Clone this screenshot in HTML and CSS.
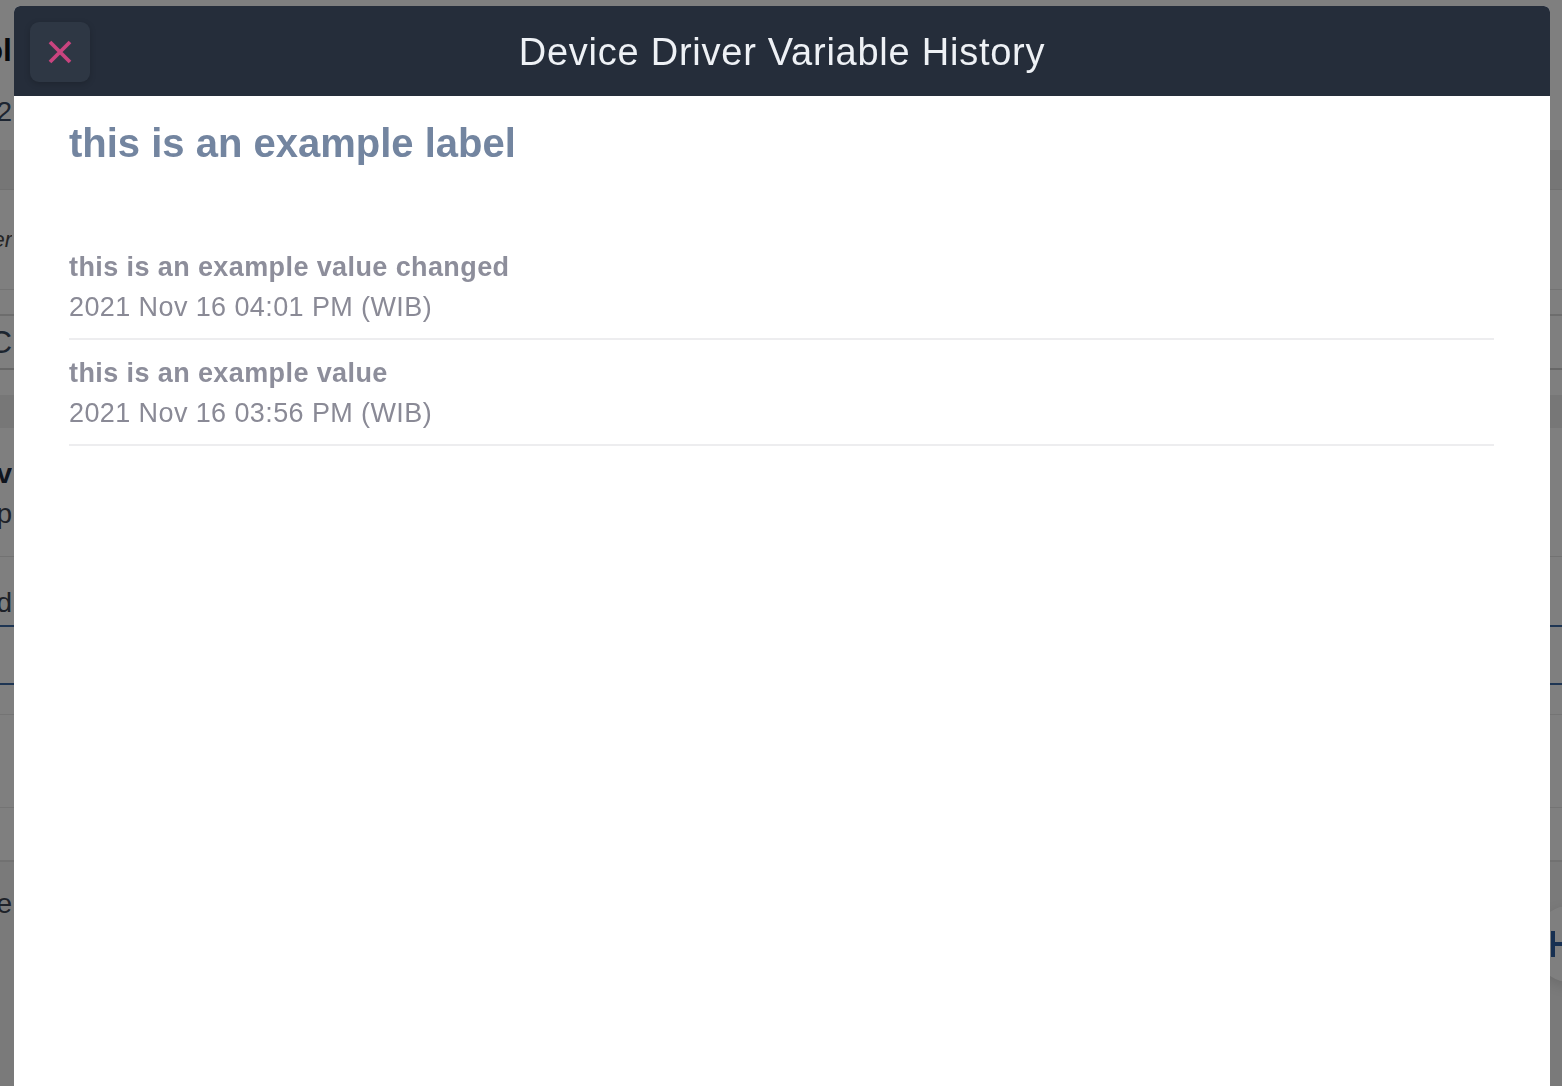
FILE: index.html
```html
<!DOCTYPE html>
<html lang="en">
<head>
<meta charset="utf-8">
<title>Device Driver Variable History</title>
<link rel="stylesheet" href="styles.css">
</head>
<body>
  <div class="page">
    <div class="row r1"><div class="frag"><span class="t-title">Tool</span></div></div>
    <div class="row r2"><div class="frag"><span class="t-sub">v1.2</span></div></div>
    <div class="row r3"></div>
    <div class="row r4"></div>
    <div class="row r5"><div class="frag"><span class="t-ital">Driver</span></div></div>
    <div class="row r6"></div>
    <div class="row r7"><div class="frag"><span class="t-big">ABC</span></div></div>
    <div class="row r8"></div>
    <div class="row r9"></div>
    <div class="row r10"><div class="frag frag-col"><span class="t-bold">Dev</span><span class="t-reg">Temp</span></div></div>
    <div class="row r11"><div class="frag"><span class="t-reg">Field</span></div></div>
    <div class="row r12"></div>
    <div class="row r13"></div>
    <div class="row r14"></div>
    <div class="row r15"></div>
    <div class="row r16"><div class="frag"><span class="t-reg">Close</span></div></div>
    <button class="fab" type="button"><span class="fab-plus"></span></button>
  </div>

  <div class="backdrop"></div>

  <div class="modal">
    <header class="modal-header">
      <button class="close-btn" type="button" aria-label="Close">
        <svg width="26" height="26" viewBox="0 0 26 26" aria-hidden="true">
          <path d="M3 3 L23 23 M23 3 L3 23" stroke="#c9447f" stroke-width="3.8" stroke-linecap="butt" fill="none"/>
        </svg>
      </button>
      <h1 class="modal-title">Device Driver Variable History</h1>
      <div class="spacer"></div>
    </header>
    <section class="modal-body">
      <h2 class="var-label">this is an example label</h2>
      <ul class="history">
        <li class="history-item">
          <div class="history-value">this is an example value changed</div>
          <div class="history-date">2021 Nov 16 04:01 PM (WIB)</div>
        </li>
        <li class="history-item">
          <div class="history-value">this is an example value</div>
          <div class="history-date">2021 Nov 16 03:56 PM (WIB)</div>
        </li>
      </ul>
    </section>
  </div>
</body>
</html>
```

FILE: styles.css
```css
* { box-sizing: border-box; }

html, body {
  margin: 0;
  padding: 0;
  width: 1562px;
  height: 1086px;
  overflow: hidden;
  background: #ffffff;
  font-family: "Liberation Sans", Arial, Helvetica, sans-serif;
}

/* ---------- background page (mostly hidden behind modal) ---------- */
.page {
  position: relative;
  display: flex;
  flex-direction: column;
  width: 1562px;
  height: 1086px;
  background: #ffffff;
}

.row {
  display: flex;
  align-items: center;
  width: 100%;
  flex: none;
}

.frag {
  width: 12px;
  display: flex;
  justify-content: flex-end;
  overflow: hidden;
  white-space: nowrap;
}

.frag-col {
  flex-direction: column;
  align-items: flex-end;
}

.t-title { font-size: 32px; font-weight: 700; color: #101418; }
.t-sub { font-size: 28px; color: #3a4a63; }
.t-ital { font-size: 22px; font-style: italic; color: #4a4a4a; }
.t-big { font-size: 32px; color: #3b4a5e; }
.t-bold { font-size: 28px; font-weight: 700; color: #1f2b3c; line-height: 40px; }
.t-reg { font-size: 28px; color: #3d4452; line-height: 40px; }

.r1 { height: 100px; }
.r2 { height: 24px; }
.r3 { height: 26px; }
.r4 { height: 40px; background: #ececec; border-bottom: 1px solid #e0e0e0; }
.r5 { height: 100px; border-bottom: 1px solid #e6e6e6; }
.r6 { height: 26px; border-bottom: 2px solid #dadada; }
.r7 { height: 54px; border-bottom: 2px solid #cfcfcf; }
.r8 { height: 25px; }
.r9 { height: 33px; background: #eeeeee; }
.r10 { height: 129px; align-items: flex-start; padding-top: 26px; border-bottom: 1px solid #e4e4e4; }
.r11 { height: 70px; align-items: flex-end; padding-bottom: 2px; border-bottom: 2px solid #3d6aa6; }
.r12 { height: 58px; border-bottom: 2px solid #3d6aa6; }
.r13 { height: 30px; border-bottom: 1px solid #e8e8e8; }
.r14 { height: 93px; border-bottom: 1px solid #e8e8e8; }
.r15 { height: 54px; border-bottom: 2px solid #e2e2e2; }
.r16 { flex: 1; align-items: flex-start; padding-top: 22px; background: #f4f4f4; }

.fab {
  position: absolute;
  left: 1532px;
  top: 906px;
  width: 76px;
  height: 76px;
  border-radius: 50%;
  border: none;
  background: #ffffff;
  box-shadow: 0 4px 14px rgba(0, 0, 0, 0.12);
  padding: 0;
}

.fab-plus {
  position: absolute;
  left: 19px;
  top: 25px;
  width: 4px;
  height: 26px;
  background: #2d5fa3;
}

.fab-plus::after {
  content: "";
  position: absolute;
  left: 0;
  top: 11px;
  width: 26px;
  height: 4px;
  background: #2d5fa3;
}

/* ---------- backdrop ---------- */
.backdrop {
  position: fixed;
  inset: 0;
  background: rgba(0, 0, 0, 0.5);
}

/* ---------- modal ---------- */
.modal {
  position: fixed;
  left: 14px;
  top: 6px;
  width: 1536px;
  height: 1110px;
  background: #ffffff;
  border-radius: 6px 6px 0 0;
  display: flex;
  flex-direction: column;
}

.modal-header {
  height: 90px;
  flex: none;
  padding-top: 2px;
  background: #252d3a;
  border-radius: 6px 6px 0 0;
  display: grid;
  grid-template-columns: 1fr auto 1fr;
  align-items: center;
}

.close-btn {
  justify-self: start;
  margin-left: 16px;
  width: 60px;
  height: 60px;
  border: none;
  border-radius: 9px;
  background: #2e3744;
  box-shadow: 0 2px 6px rgba(0, 0, 0, 0.18);
  display: flex;
  align-items: center;
  justify-content: center;
  padding: 0;
}

.close-btn svg { display: block; }

.modal-title {
  margin: 0;
  font-size: 38px;
  font-weight: 400;
  letter-spacing: 0.75px;
  color: #eef1f5;
  line-height: 44px;
  white-space: nowrap;
}

.modal-body {
  padding: 0 56px 0 55px;
}

.var-label {
  margin: 24px 0 0;
  font-size: 40px;
  line-height: 46px;
  font-weight: 700;
  color: #7385a0;
}

.history {
  list-style: none;
  margin: 68px 0 0;
  padding: 0;
}

.history-item {
  padding: 13px 0 11px;
  border-bottom: 2px solid #ededef;
}

.history-value {
  font-size: 27px;
  line-height: 40px;
  font-weight: 700;
  letter-spacing: 0.4px;
  color: #8d8e9b;
}

.history-date {
  font-size: 27px;
  line-height: 40px;
  font-weight: 400;
  letter-spacing: 0.4px;
  color: #8a8a96;
}
```
